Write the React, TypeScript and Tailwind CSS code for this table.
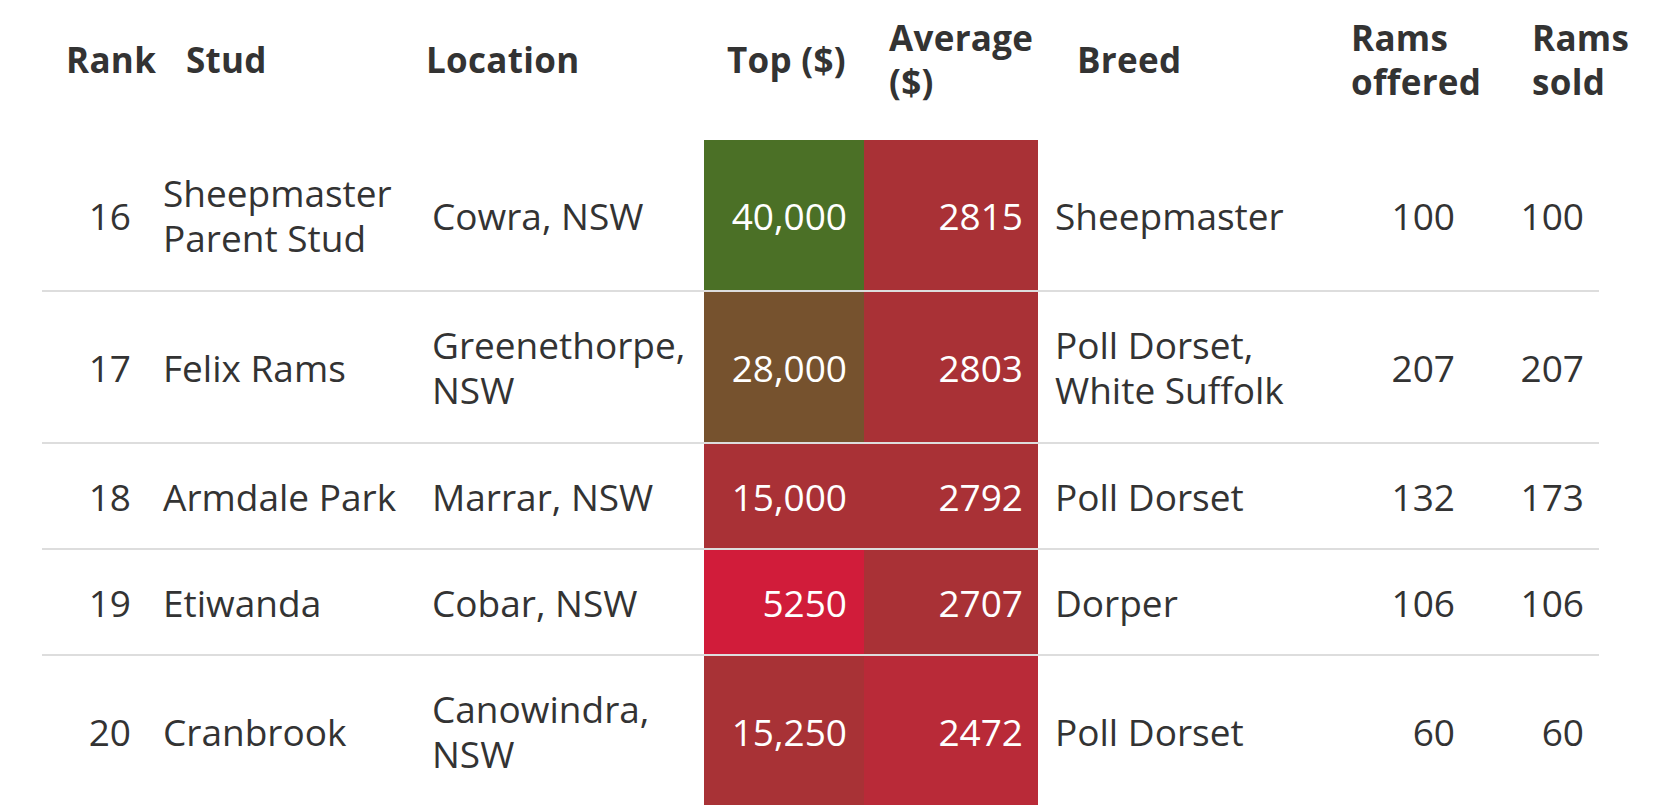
import React from "react";

type Row = {
  rank: string;
  stud: string[];
  loc: string[];
  top: string;
  topBg: string;
  avg: string;
  avgBg: string;
  breed: string[];
  offered: string;
  sold: string;
};

const rows: Row[] = [
  { rank: "16", stud: ["Sheepmaster", "Parent Stud"], loc: ["Cowra, NSW"], top: "40,000", topBg: "bg-[#4b7026]", avg: "2815", avgBg: "bg-[#a93136]", breed: ["Sheepmaster"], offered: "100", sold: "100" },
  { rank: "17", stud: ["Felix Rams"], loc: ["Greenethorpe,", "NSW"], top: "28,000", topBg: "bg-[#76522e]", avg: "2803", avgBg: "bg-[#a93136]", breed: ["Poll Dorset,", "White Suffolk"], offered: "207", sold: "207" },
  { rank: "18", stud: ["Armdale Park"], loc: ["Marrar, NSW"], top: "15,000", topBg: "bg-[#a93136]", avg: "2792", avgBg: "bg-[#a93136]", breed: ["Poll Dorset"], offered: "132", sold: "173" },
  { rank: "19", stud: ["Etiwanda"], loc: ["Cobar, NSW"], top: "5250", topBg: "bg-[#d11c3a]", avg: "2707", avgBg: "bg-[#a93136]", breed: ["Dorper"], offered: "106", sold: "106" },
  { rank: "20", stud: ["Cranbrook"], loc: ["Canowindra,", "NSW"], top: "15,250", topBg: "bg-[#a83236]", avg: "2472", avgBg: "bg-[#b92a38]", breed: ["Poll Dorset"], offered: "60", sold: "60" },
];

const cols = "grid grid-cols-[105px_269px_288px_160px_174px_262px_171px_128px]";

function Lines({ lines }: { lines: string[] }) {
  return (
    <span className="whitespace-nowrap">
      {lines.map((l, i) => (
        <React.Fragment key={i}>
          {i > 0 && <br />}
          {l}
        </React.Fragment>
      ))}
    </span>
  );
}

export default function App() {
  return (
    <div className="w-[1665px] h-[805px] overflow-hidden bg-white font-['Open_Sans',sans-serif] text-[#333333]">
      <div className="ml-[42px] w-[1557px]">
        {/* header */}
        <div className={`${cols} h-[140px] pb-[20px] items-center text-[35px] leading-[44px] tracking-[0.3px] font-bold text-[#333333]`}>
          <div className="pl-[24px] whitespace-nowrap">Rank</div>
          <div className="pl-[39px] whitespace-nowrap">Stud</div>
          <div className="pl-[10px] whitespace-nowrap">Location</div>
          <div className="pr-[18px] text-right whitespace-nowrap">Top ($)</div>
          <div className="pl-[25px] whitespace-nowrap">
            Average
            <br />
            ($)
          </div>
          <div className="pl-[39px] whitespace-nowrap">Breed</div>
          <div className="pl-[51px] whitespace-nowrap">
            Rams
            <br />
            offered
          </div>
          <div className="pl-[61px] whitespace-nowrap">
            Rams
            <br />
            sold
          </div>
        </div>
        {/* body */}
        {rows.map((r) => {
          const tall = r.stud.length > 1 || r.loc.length > 1 || r.breed.length > 1;
          const py = tall ? "py-[30px]" : "py-[29.5px]";
          return (
            <div key={r.rank} className={`${cols} text-[37px] leading-[45px] border-b-2 border-[#dddddd]`}>
              <div className={`${py} pr-[16px] text-right flex flex-col justify-center`}>{r.rank}</div>
              <div className={`${py} pl-[16px] flex flex-col justify-center`}>
                <Lines lines={r.stud} />
              </div>
              <div className={`${py} pl-[16px] flex flex-col justify-center`}>
                <Lines lines={r.loc} />
              </div>
              <div className={`${py} pr-[17px] text-right text-white flex flex-col justify-center ${r.topBg}`}>{r.top}</div>
              <div className={`${py} pr-[15px] text-right text-white flex flex-col justify-center ${r.avgBg}`}>{r.avg}</div>
              <div className={`${py} pl-[17px] flex flex-col justify-center`}>
                <Lines lines={r.breed} />
              </div>
              <div className={`${py} pr-[16px] text-right flex flex-col justify-center`}>{r.offered}</div>
              <div className={`${py} pr-[15px] text-right flex flex-col justify-center`}>{r.sold}</div>
            </div>
          );
        })}
      </div>
    </div>
  );
}
